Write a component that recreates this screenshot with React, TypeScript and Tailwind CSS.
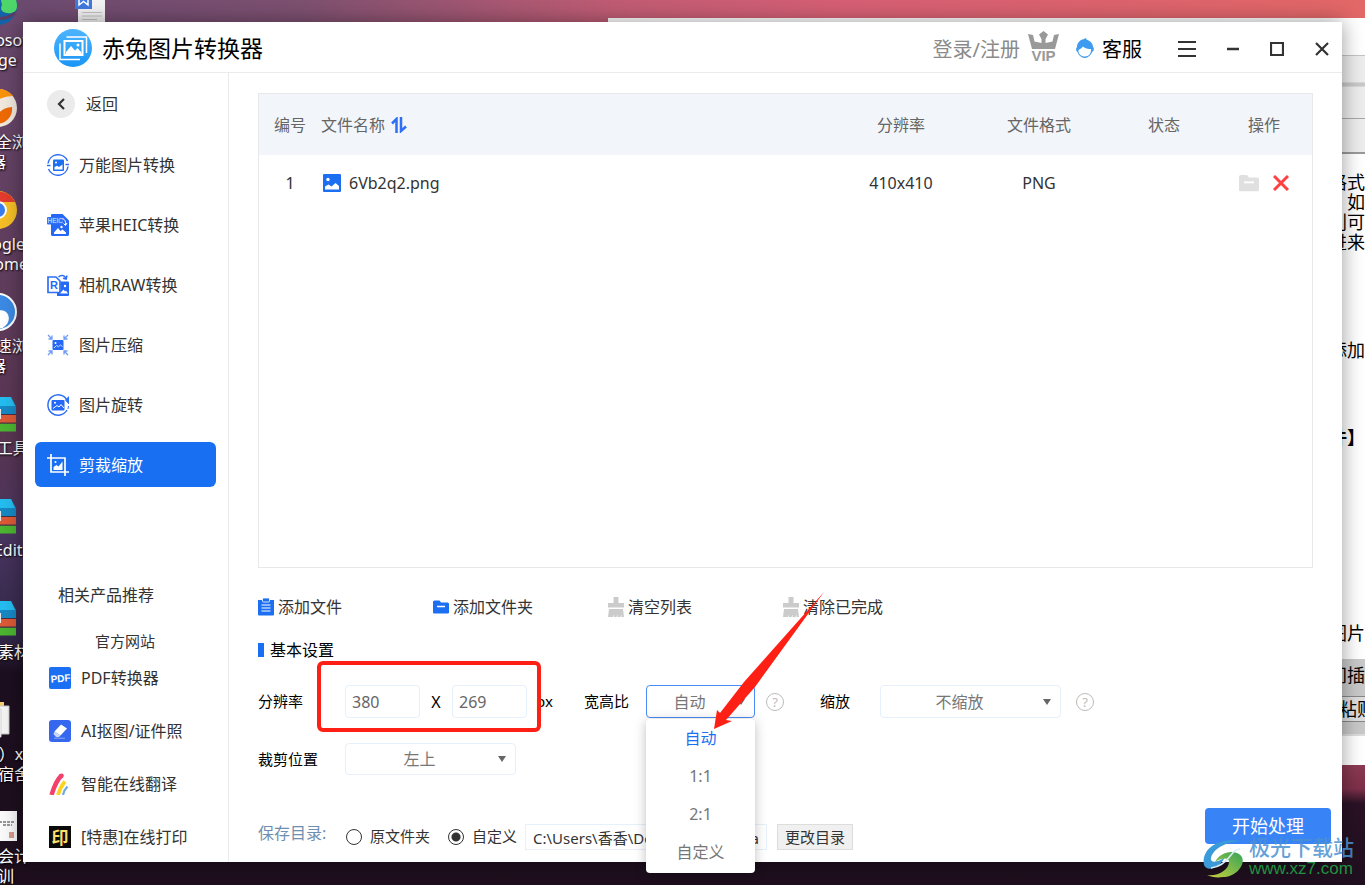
import clsx from 'clsx';
import { useState, type ReactNode } from 'react';

const svgBox = 'h-[22px] w-[22px] shrink-0';

function UniversalIcon() {
    return (
        <svg viewBox="0 0 22 22" className={svgBox} fill="none" stroke="#2f6ff5">
            <path d="M1 9.5A10.2 10.2 0 0 1 20.5 7M21 12.5A10.2 10.2 0 0 1 1.5 15" strokeWidth="1.5" />
            <path d="M0 11.5h3.5M18.5 10.5h3.5" strokeWidth="1.5" />
            <rect x="6" y="5.5" width="11" height="11.5" rx="1" fill="#1d6ff2" stroke="none" />
            <path d="M7.5 15.5v-2.500l2.5-1.300 2 1.200 3.5-2.400v5z" fill="#fff" stroke="none" />
            <circle cx="9" cy="8.5" r="1" fill="#fff" stroke="none" />
        </svg>
    );
}

function HeicIcon() {
    return (
        <svg viewBox="0 0 22 22" className={svgBox}>
            <path d="M5 0h10.5L22 6.5v14a1.5 1.5 0 0 1-1.5 1.5h-15A1.5 1.5 0 0 1 4 20.5V1a1 1 0 0 1 1-1z" fill="#2468f5" />
            <rect x="0" y="3" width="16" height="7.5" rx="1" fill="#2f6ff5" />
            <text x="0.5" y="9" fontSize="6.5" fill="#dce8ff" fontFamily="Liberation Sans, sans-serif">
                HEIC
            </text>
            <path d="M7 20v-1.5l4-4.5 2.5 3 2-1.5 3.5 3V20z" fill="#fff" />
            <path d="M15.5 4.5c2.5 1 3.5 3 3 6.5M16.5 9.5l2 2 1.5-2.5" stroke="#fff" fill="none" />
            <circle cx="14.5" cy="13" r="1.2" fill="#fff" />
        </svg>
    );
}

function RawIcon() {
    return (
        <svg viewBox="0 0 22 22" className={svgBox} fill="none">
            <path d="M13.5 7.5H21a1 1 0 0 1 1 1V21a1 1 0 0 1-1 1H10v-4h3.5z" fill="#2468f5" />
            <path d="M1 3h8l4 4v11.5H1z" fill="#fff" stroke="#2f6ff5" strokeWidth="1.7" />
            <text x="3" y="15" fontSize="11" fontWeight="700" fill="#2468f5" fontFamily="Liberation Sans, sans-serif">
                R
            </text>
            <path d="M11.5 3c2.5-2.5 6-2 7.5 1.5M20 1.5l-.8 3.5-3.2-.8" stroke="#2f6ff5" strokeWidth="1.5" />
            <path d="M13 19.5l3.5-4 1.5 2 1-1 2 3z" fill="#fff" />
            <circle cx="18" cy="12" r="1.2" fill="#fff" />
        </svg>
    );
}

function CompressIcon() {
    return (
        <svg viewBox="0 0 22 22" className={svgBox} fill="none" stroke="#6f9bf8" strokeWidth="1.3">
            <rect x="5.5" y="6" width="11" height="10" rx="1" fill="#2468f5" stroke="none" />
            <path d="M7 14l2.5-2.5 2 1.2 2-1.7 2 1.5" stroke="#cfe0ff" strokeWidth="1" />
            <circle cx="8.5" cy="9" r="1" fill="#fff" stroke="none" />
            <path d="M1 1l4 4M5 1.5V5H1.5M21 1l-4 4M17 1.5V5h3.5M1 21l4-4M5 20.5V17H1.5M21 21l-4-4M17 20.5V17h3.5" />
        </svg>
    );
}

function RotateIcon() {
    return (
        <svg viewBox="0 0 22 22" className={svgBox} fill="none" stroke="#2f6ff5" strokeWidth="1.5">
            <path d="M20 6A10.2 10.2 0 1 0 20 16" />
            <path d="M22 2.5v7.5l-3.5-4zM21.5 12l-.5 3" fill="#2f6ff5" strokeWidth="1" />
            <rect x="4.5" y="6" width="13" height="10.5" rx="1" fill="#2468f5" stroke="none" />
            <path d="M6 14.5l4-3 2 1.5 2-2.5 3 3.5" stroke="#fff" strokeWidth="1" />
            <circle cx="8" cy="8.7" r="1" fill="#fff" stroke="none" />
        </svg>
    );
}

function CropIcon() {
    return (
        <svg viewBox="0 0 22 22" className={svgBox} fill="none" stroke="#fff" strokeWidth="1.7">
            <path d="M4 0v18h18M0 4h18v18" />
            <path d="M6.5 16v-3l3-2 2 1.5 4-5V16z" fill="#fff" stroke="none" />
            <circle cx="8.5" cy="8" r="1" fill="#fff" stroke="none" />
        </svg>
    );
}

function PdfIcon() {
    return (
        <svg viewBox="0 0 22 22" className={svgBox}>
            <rect width="22" height="22" rx="2" fill="#1a6ff2" />
            <text x="1.5" y="15" fontSize="10" fontWeight="700" fill="#fff" transform="rotate(-5 11 11)" fontFamily="Liberation Sans, sans-serif">
                PDF
            </text>
        </svg>
    );
}

function EraserIcon() {
    return (
        <svg viewBox="0 0 22 22" className={svgBox}>
            <rect width="22" height="22" rx="3" fill="#3568ee" />
            <path d="M12 4.5l6 4-6.5 7-6-4z" fill="#fff" />
            <path d="M5.5 11.5l6 4-1.5 1.5H7L4.5 14z" fill="#c9d7fb" />
            <path d="M5 18.2h11" stroke="#8faaf5" />
        </svg>
    );
}

function TranslateIcon() {
    return (
        <svg viewBox="0 0 22 22" className={svgBox} fill="none">
            <path d="M2.5 22C5 14 7.5 7 12.5 2.5" stroke="#f2416b" strokeWidth="4.5" />
            <circle cx="12.5" cy="2.8" r="2.3" fill="#f2416b" />
            <path d="M9 22c1.5-5 3-9 7-13.5" stroke="#ffd21c" strokeWidth="3.8" />
            <path d="M14 22c.5-3 2-6 4.5-8.5" stroke="#6ea8e0" strokeWidth="2.2" />
        </svg>
    );
}

function PrintIcon() {
    return (
        <svg viewBox="0 0 22 22" className={svgBox}>
            <rect width="22" height="22" fill="#0a0a0a" />
            <text x="2.5" y="17.5" fontSize="17" fontWeight="700" fill="#ffdf6b" fontFamily="Noto Sans CJK SC, sans-serif">
                印
            </text>
        </svg>
    );
}

function AppLogo() {
    return (
        <svg viewBox="0 0 38 38" className="h-[38px] w-[38px]" fill="none" stroke="#fff">
            <defs>
                <linearGradient id="logo" x1="0" y1="0" x2="0" y2="1">
                    <stop offset="0" stopColor="#4cb4ff" />
                    <stop offset="1" stopColor="#1b95f5" />
                </linearGradient>
            </defs>
            <circle cx="19" cy="19" r="19" fill="url(#logo)" stroke="none" />
            <path d="M12.5 8h20v16" strokeWidth="1.5" />
            <path d="M6 14.5v16h20" strokeWidth="1.5" />
            <rect x="10.5" y="12" width="18" height="14" strokeWidth="2" />
            <path d="M12 23l5-6 4 4.5 2.5-2.5 4 4.5v1.5H12z" fill="#fff" stroke="none" />
            <circle cx="24" cy="16" r="1.5" fill="#fff" stroke="none" />
        </svg>
    );
}

function FolderIcon({ className }: { className: string }) {
    return (
        <svg viewBox="0 0 16 14" className={className}>
            <path d="M0 2a1.5 1.5 0 0 1 1.5-1.5h5L8 2.5h6.5A1.5 1.5 0 0 1 16 4v8.5a1 1 0 0 1-1 1H1a1 1 0 0 1-1-1z" fill="currentColor" />
            <path d="M4 6.5h8" stroke="#fff" strokeWidth="1.5" />
        </svg>
    );
}

function ClipboardIcon() {
    return (
        <svg viewBox="0 0 16 18" className="h-[18px] w-4" fill="none">
            <path d="M0 2h16v14.5a1 1 0 0 1-1 1H1a1 1 0 0 1-1-1z" fill="#1d6ff2" />
            <rect x="4.5" y="0" width="7" height="4" rx="1" fill="#1d6ff2" stroke="#fff" strokeWidth=".8" />
            <path d="M3.5 7h9M3.5 10h9M3.5 13h9" stroke="#fff" strokeWidth="1.2" />
        </svg>
    );
}

function BrushIcon() {
    return (
        <svg viewBox="0 0 16 20" className="h-5 w-4" fill="#cbcbcb">
            <path d="M5.5 0h5v6H16v4.5H0V6h5.5zM1 12h14l1 8h-2.5v-2.5l-1 2.5H9.5v-2.5l-1 2.5H6v-2.5L5 20H0z" />
        </svg>
    );
}

const tools = [
    { label: '万能图片转换', icon: <UniversalIcon /> },
    { label: '苹果HEIC转换', icon: <HeicIcon /> },
    { label: '相机RAW转换', icon: <RawIcon /> },
    { label: '图片压缩', icon: <CompressIcon /> },
    { label: '图片旋转', icon: <RotateIcon /> },
    { label: '剪裁缩放', icon: <CropIcon /> },
];

const products = [
    { label: 'PDF转换器', icon: <PdfIcon /> },
    { label: 'AI抠图/证件照', icon: <EraserIcon /> },
    { label: '智能在线翻译', icon: <TranslateIcon /> },
    { label: '[特惠]在线打印', icon: <PrintIcon /> },
];

const actions = [
    { label: '添加文件', icon: <ClipboardIcon /> },
    { label: '添加文件夹', icon: <FolderIcon className="h-[14px] w-4 text-[#1d6ff2]" /> },
    { label: '清空列表', icon: <BrushIcon /> },
    { label: '清除已完成', icon: <BrushIcon /> },
];

const ratios = ['自动', '1:1', '2:1', '自定义'];

function WinRar() {
    return (
        <svg viewBox="0 0 38 38" className="h-[38px] w-[38px]">
            <path d="M3 2h29l5 9v8H3z" fill="#1788c4" />
            <path d="M3 2h29l4 9H3z" fill="#25bdf0" />
            <path d="M3 20h34v8H3z" fill="#dd5a37" />
            <path d="M3 28.5h34v8H3z" fill="#4cb531" />
            <path d="M3 19.5h34M3 28h34" stroke="#493043" />
            <path d="M18 14h4v10h-4z" fill="#e8e8e8" />
        </svg>
    );
}

const shortcuts: { lines: string[]; icon: ReactNode }[] = [
    {
        lines: ['Microsoft', 'Edge'],
        icon: (
            <svg viewBox="0 0 38 38" className="h-[38px] w-[38px]">
                <circle cx="19" cy="19" r="19" fill="#1463a8" />
                <path d="M19 0a19 19 0 0 1 19 19c0 6-5 8-10 7-6-1-7-5-5-8z" fill="#4fd66a" />
                <path d="M14 28c6 5 14 4 22-2" stroke="#5d3c66" strokeWidth="3" fill="none" />
            </svg>
        ),
    },
    {
        lines: ['360安全浏览', '器'],
        icon: (
            <svg viewBox="0 0 38 38" className="h-[38px] w-[38px]">
                <circle cx="19" cy="19" r="19" fill="#f2e9de" />
                <path d="M6 5a19 19 0 0 1 28 2c-6 0-14 2-28 10z" fill="#f9930e" />
                <path d="M18 35c-2-10 4-16 15-17 1 8-4 16-15 17z" fill="#ee6a06" />
            </svg>
        ),
    },
    {
        lines: ['Google', 'Chrome'],
        icon: (
            <svg viewBox="0 0 38 38" className="h-[38px] w-[38px]">
                <circle cx="19" cy="19" r="19" fill="#f6bf26" />
                <path d="M2 11a19 19 0 0 1 34 0z" fill="#e33b2e" />
                <circle cx="19" cy="19" r="9" fill="#fff" />
                <circle cx="19" cy="19" r="7" fill="#3b7ded" />
            </svg>
        ),
    },
    {
        lines: ['360极速浏览', '器'],
        icon: (
            <svg viewBox="0 0 38 38" className="h-[38px] w-[38px]">
                <circle cx="19" cy="19" r="18" fill="#3b8ae4" stroke="#fff" strokeWidth="2" />
                <path d="M8 34c0-12 14-22 20-14 5 7-1 15-9 16z" fill="#fff" />
            </svg>
        ),
    },
    { lines: ['PDF工具'], icon: <WinRar /> },
    { lines: ['HtmlEditor'], icon: <WinRar /> },
    { lines: ['图片素材'], icon: <WinRar /> },
    {
        lines: ['1（1）xx', '学生宿舍'],
        icon: (
            <svg viewBox="0 0 38 38" className="h-[38px] w-[38px]">
                <path d="M6 1h19v30H6z" fill="#f5cd6d" />
                <path d="M10 5h20v28H10z" fill="#f4f4f4" stroke="#c4c4c4" />
                <path d="M4 8h18v28H4z" fill="#fff" stroke="#cfcfcf" />
            </svg>
        ),
    },
    {
        lines: ['初级会计', '培训'],
        icon: (
            <svg viewBox="0 0 38 38" className="h-[38px] w-[38px]">
                <path d="M0 8h38v30H0z" fill="#fafafa" />
                <path d="M20 19h15M24 22h9" stroke="#777" strokeWidth="1.5" strokeDasharray="3 1" />
                <path d="M30 29h5v6h-5z" fill="#d89a8a" />
            </svg>
        ),
    },
];

function Desktop() {
    return (
        <>
            <div className="absolute top-[-13px] left-[-52px] grid w-[100px] auto-rows-[102px]">
                {shortcuts.map(({ lines, icon }) => (
                    <div key={lines.join('')} className="flex flex-col items-center">
                        {icon}
                        <div className="mt-[5px] text-center text-base leading-5 whitespace-nowrap text-white [text-shadow:1px_1px_2px_#000]">
                            {lines.map((line) => (
                                <div key={line}>{line}</div>
                            ))}
                        </div>
                    </div>
                ))}
            </div>
            <svg viewBox="0 0 30 24" className="absolute top-0 left-[75px] h-6 w-[30px]">
                <path d="M3 0h27v24H3z" fill="#f3f3f3" />
                <path d="M0 0h17v9H0z" fill="#4179e0" />
                <path d="M4 0v5l4.5-3.5L13 5V0" stroke="#fff" strokeWidth="1.5" fill="none" />
                <path d="M7 12.5h20M7 16h20M7 19.5h15" stroke="#c4c4c4" />
            </svg>
        </>
    );
}

// Document window sitting behind the converter; only its edges stay visible.
function BackWindow() {
    return (
        <div className="absolute top-[18px] right-0 bottom-[120px] left-[608px] flex flex-col items-end overflow-hidden bg-white text-lg leading-5 text-black">
            <div className="h-[38px] w-full border-b border-[#c4c4c4]" />
            <div className="h-[26px] w-full bg-[#ededed]" />
            <div className="h-[5px] w-full border-y border-[#d9d9d9] bg-[#c9c9c9]" />
            <div className="h-8 w-full border-b border-[#a8a8a8] bg-[#ededed]" />
            <div className="h-[35px] w-full border-b-2 border-[#999] bg-[#ededed]" />
            <div className="mt-[18px] text-right">
                <p>格式</p>
                <p>如</p>
                <p>别可</p>
                <p>进来</p>
            </div>
            <p className="mt-[88px]">添加</p>
            <p className="mt-[67px] font-bold">件】</p>
            <p className="mt-[176px]">图片</p>
            <div className="mt-4 flex w-full flex-col items-end border-b-2 border-[#ddd] bg-[#c9c9c9] pb-3">
                <p className="h-[37px] leading-8">间插</p>
                <div className="w-full border-y border-[#888] bg-[#dedede] text-right leading-6">
                    <span className="-mr-[10px]">粘贴</span>
                </div>
            </div>
        </div>
    );
}

function TitleBar() {
    return (
        <header className="flex h-[51px] shrink-0 items-center border-b border-[#ebebeb] pt-[2px] pr-[13px] pl-[31px]">
            <AppLogo />
            <h1 className="ml-[10px] text-[23px] leading-8 text-black">赤兔图片转换器</h1>
            <button type="button" className="ml-auto flex items-center gap-2 text-xl text-[#8a8a8a]">
                <span className="pt-1">登录/注册</span>
                <span className="flex w-[31px] flex-col items-center pb-1">
                    <svg viewBox="0 0 31 19" className="h-[19px] w-[31px]" fill="#999">
                        <path d="M0 3l5 1 1.5 6.5L13.5 12V8L11 3.5 15.5 0 20 3.5 17.5 8v4l7-1.5L26 4l5-1-4 15H4z" />
                    </svg>
                    <span className="font-[Liberation_Sans,sans-serif] text-[15px] leading-3 font-bold text-[#999]">VIP</span>
                </span>
            </button>
            <button type="button" className="ml-[17px] flex items-center gap-2 pt-1 text-xl text-black">
                <svg viewBox="0 0 18 20" className="-mt-1 h-5 w-[18px]">
                    <path d="M8 1l2-1 .5 1.5C15 3 17 6 17 9c1.5 1 1 4-.5 4.5C15 17 12 20 9 20s-6.5-2.5-7.5-6C-.5 13 0 10 1 9c0-4 2.5-7 7-8z" fill="#3d9cf2" />
                    <path d="M2.5 12C4 11 6 10 7 8.5c2 2 5 2.5 8 2.5.5 4-2 7.5-6 7.5S2 16 2.5 12z" fill="#fff" />
                </svg>
                客服
            </button>
            <div className="ml-9 flex items-center gap-[31px] pt-[2px] text-[#333]">
                <button type="button" aria-label="菜单">
                    <svg viewBox="0 0 18 16" className="h-4 w-[18px]" stroke="currentColor" strokeWidth="2">
                        <path d="M0 1h18M0 8h18M0 15h18" />
                    </svg>
                </button>
                <button type="button" aria-label="最小化">
                    <svg viewBox="0 0 12 14" className="h-[14px] w-3" stroke="currentColor" strokeWidth="2.5">
                        <path d="M0 7h12" />
                    </svg>
                </button>
                <button type="button" aria-label="最大化">
                    <svg viewBox="0 0 14 14" className="h-[14px] w-[14px]" fill="none" stroke="currentColor" strokeWidth="2.2">
                        <path d="M1 1h12v12H1z" />
                    </svg>
                </button>
                <button type="button" aria-label="关闭">
                    <svg viewBox="0 0 14 14" className="h-[14px] w-[14px]" stroke="currentColor" strokeWidth="2.2">
                        <path d="M1 1l12 12M13 1L1 13" />
                    </svg>
                </button>
            </div>
        </header>
    );
}

function Sidebar() {
    const [active, setActive] = useState('剪裁缩放');

    return (
        <aside className="flex w-[206px] shrink-0 flex-col border-r border-[#ebebeb] text-base text-[#333]">
            <button type="button" className="mt-[17px] ml-6 flex h-7 items-center gap-[11px]">
                <span className="flex h-7 w-7 items-center justify-center rounded-full bg-[#ebebeb]">
                    <svg viewBox="0 0 8 12" className="h-3 w-2" fill="none" stroke="#333" strokeWidth="2.2">
                        <path d="M7 1L2 6l5 5" />
                    </svg>
                </span>
                返回
            </button>
            <nav className="mx-3 mt-6 flex flex-col gap-[15px]">
                {tools.map(({ label, icon }) => (
                    <button
                        key={label}
                        type="button"
                        onClick={() => setActive(label)}
                        className={clsx('flex h-[45px] items-center gap-[10px] rounded-md pl-3', label === active && 'bg-[#186ff2] text-white')}
                    >
                        {icon}
                        {label}
                    </button>
                ))}
            </nav>
            <h2 className="mt-24 ml-[35px] leading-6">相关产品推荐</h2>
            <a href="#site" className="mt-6 ml-[72px] text-[15px] leading-5">
                官方网站
            </a>
            <ul className="mt-4 ml-[26px] flex flex-col gap-[31px]">
                {products.map(({ label, icon }) => (
                    <li key={label}>
                        <a href="#product" className="flex h-[22px] items-center gap-[10px] whitespace-nowrap">
                            {icon}
                            {label}
                        </a>
                    </li>
                ))}
            </ul>
        </aside>
    );
}

function FileTable() {
    return (
        <div className="mr-[29px] flex-1 border border-[#e6e8ea]">
            <table className="w-full table-fixed text-base text-[#333]">
                <thead>
                    <tr className="h-[61px] bg-[#f2f6fa] text-[#666] [&>th]:font-normal">
                        <th className="w-[62px]">编号</th>
                        <th className="text-left">
                            <span className="flex items-center gap-[6px]">
                                文件名称
                                <svg viewBox="0 0 16 16" className="h-4 w-4" fill="none" stroke="#2f6ff5" strokeWidth="2.5">
                                    <path d="M5.5 16V2L1 6.5M10 0v14l5-4.5" />
                                </svg>
                            </span>
                        </th>
                        <th className="w-[130px]">分辨率</th>
                        <th className="w-[146px]">文件格式</th>
                        <th className="w-[104px]">状态</th>
                        <th className="w-24">操作</th>
                    </tr>
                </thead>
                <tbody>
                    <tr className="h-14 text-center">
                        <td>1</td>
                        <td>
                            <span className="flex items-center gap-2">
                                <svg viewBox="0 0 18 18" className="ml-[2px] h-[18px] w-[18px]">
                                    <rect width="18" height="18" rx="1" fill="#1d6ff2" />
                                    <circle cx="5" cy="5.5" r="1.7" fill="#fff" />
                                    <path d="M2 15.5v-3l3.5-2 3 2 4-3.5 3.5 3v3.5z" fill="#fff" />
                                </svg>
                                6Vb2q2.png
                            </span>
                        </td>
                        <td>410x410</td>
                        <td>PNG</td>
                        <td />
                        <td>
                            <span className="flex items-center justify-center gap-[14px]">
                                <button type="button" aria-label="打开文件夹">
                                    <FolderIcon className="h-[18px] w-5 text-[#e0e0e0]" />
                                </button>
                                <button type="button" aria-label="删除">
                                    <svg viewBox="0 0 16 16" className="h-4 w-4" stroke="#ff4040" strokeWidth="3">
                                        <path d="M1 1l14 14M15 1L1 15" />
                                    </svg>
                                </button>
                            </span>
                        </td>
                    </tr>
                </tbody>
            </table>
        </div>
    );
}

function Caret() {
    return (
        <svg viewBox="0 0 8 6" className="pointer-events-none absolute top-1/2 right-[10px] h-[6px] w-2 -translate-y-1/2" fill="#666">
            <path d="M0 0h8L4 6z" />
        </svg>
    );
}

function SelectBox({ id, value, options, onChange, open }: { id: string; value: string; options: string[]; onChange?: (v: string) => void; open?: boolean }) {
    return (
        <>
            <select
                id={id}
                value={value}
                onChange={(e) => onChange?.(e.target.value)}
                className={clsx(
                    'h-full w-full appearance-none rounded border bg-white pr-[22px] text-center text-base text-[#777] [text-align-last:center]',
                    open ? 'border-[#4a8df6]' : 'border-[#e6f0fa]',
                )}
            >
                {options.map((o) => (
                    <option key={o}>{o}</option>
                ))}
            </select>
            <Caret />
        </>
    );
}

function Help() {
    return (
        <button type="button" aria-label="帮助" className="h-[18px] w-[18px] shrink-0 rounded-full border border-[#bbb] text-[13px] leading-4 text-[#bbb]">
            ?
        </button>
    );
}

function Settings() {
    const [ratio, setRatio] = useState('自动');
    const field = 'h-[33px] w-[75px] rounded border border-[#e6f0fa] px-[6px] text-base text-[#666]';

    return (
        <>
            <div className="mt-[23px] flex h-[33px] items-center text-[15px] text-black">
                <label htmlFor="width" className="w-[87px]">
                    分辨率
                </label>
                <div className="relative flex items-center">
                    <input id="width" defaultValue="380" className={field} />
                    <label htmlFor="height" className="w-8 text-center text-base">
                        X
                    </label>
                    <input id="height" defaultValue="269" className={field} />
                    <div className="pointer-events-none absolute -top-6 -right-[14px] -bottom-[14px] -left-7 z-10 rounded-md border-4 border-[#ff2015]" />
                </div>
                <span className="ml-[9px] w-[48px]">px</span>
                <label htmlFor="ratio" className="w-[62px]">
                    宽高比
                </label>
                <div className="relative h-[33px] w-[109px]">
                    <SelectBox id="ratio" value={ratio} options={ratios} onChange={setRatio} open />
                    <ul role="listbox" className="absolute top-[34px] right-0 left-0 z-10 flex h-[154px] flex-col rounded bg-white pb-[2px] shadow-[0_2px_12px_rgba(0,0,0,0.25)]">
                        {ratios.map((r) => (
                            <li key={r} role="option" aria-selected={r === ratio} className="flex-1">
                                <button type="button" onClick={() => setRatio(r)} className={clsx('h-full w-full text-base', r === ratio ? 'text-[#1d6ff2]' : 'text-[#777]')}>
                                    {r}
                                </button>
                            </li>
                        ))}
                    </ul>
                    <svg viewBox="0 0 112 140" className="pointer-events-none absolute top-[-94px] left-[67px] z-20 h-[140px] w-28" fill="#ff2015">
                        <path d="M111 1L31 91 7 122 4 119 1 138 19 130 13 129 42 96z" />
                    </svg>
                </div>
                <span className="ml-[11px] flex w-[54px]">
                    <Help />
                </span>
                <label htmlFor="zoom" className="w-[60px]">
                    缩放
                </label>
                <div className="relative mr-[15px] h-[33px] w-[181px]">
                    <SelectBox id="zoom" value="不缩放" options={['不缩放']} />
                </div>
                <Help />
            </div>
            <div className="mt-[25px] flex h-8 items-center text-[15px] text-black">
                <label htmlFor="position" className="w-[87px]">
                    裁剪位置
                </label>
                <div className="relative h-8 w-[171px]">
                    <SelectBox id="position" value="左上" options={['左上']} />
                </div>
            </div>
        </>
    );
}

function SaveBar() {
    const [target, setTarget] = useState('custom');
    const radio = 'h-4 w-4 appearance-none rounded-full border border-[#333] checked:bg-[radial-gradient(circle,#333_0_4px,transparent_5px)]';

    return (
        <footer className="mt-[33px] mr-[11px] mb-3 flex h-[42px] items-end text-[15px] text-[#333]">
            <span className="mb-1 w-[88px] text-base leading-[26px] text-[#6f8fb0]">保存目录:</span>
            <label className="mr-[18px] flex h-[27px] items-center gap-2">
                <input type="radio" name="target" checked={target === 'source'} onChange={() => setTarget('source')} className={radio} />
                原文件夹
            </label>
            <label className="mr-2 flex h-[27px] items-center gap-2">
                <input type="radio" name="target" checked={target === 'custom'} onChange={() => setTarget('custom')} className={radio} />
                自定义
            </label>
            <input aria-label="保存目录" defaultValue="C:\Users\香香\Desktop\output\a" className="h-[26px] w-[242px] border border-[#e6f0fa] px-[7px]" />
            <button type="button" className="ml-[10px] h-[26px] w-19 border border-[#ddd] bg-[#f0f0f0]">
                更改目录
            </button>
            <button type="button" className="ml-auto h-9 w-[126px] self-start rounded bg-[#3884f7] text-lg text-white">
                开始处理
            </button>
        </footer>
    );
}

function Watermark() {
    return (
        <div className="pointer-events-none absolute right-[11px] bottom-[6px] z-30 flex items-center gap-1">
            <svg viewBox="0 0 42 40" className="h-10 w-[42px]" fill="none">
                <defs>
                    <linearGradient id="leaf" x1="0" y1="1" x2="1" y2="0">
                        <stop offset="0" stopColor="#c9cf3c" />
                        <stop offset="1" stopColor="#35a457" />
                    </linearGradient>
                </defs>
                <path d="M1 27C-2 12 14-1 38 3 22 4 10 11 8 20c-1 6 8 4 14-1-3 8-17 17-21 8z" fill="#3b9ada" />
                <path d="M4 37c10 2 22-5 22-13 0-5-8-4-14 0 4-8 14-12 22-9 13 5 2 24-14 24-6 1-12 0-16-2z" fill="url(#leaf)" />
                <path d="M8 30c9-1 15-6 20-13 3-4 6-6 9-6" stroke="#d9f0fa" strokeWidth="1.5" />
            </svg>
            <div className="flex flex-col">
                <span className="text-[21px] leading-5 font-medium text-[#4a90d0]/85">极光下载站</span>
                <span className="pt-[2px] font-[Liberation_Sans,sans-serif] text-[17px] leading-5 text-[#1f9140]">www.xz7.com</span>
            </div>
        </div>
    );
}

export default function App() {
    return (
        <div className="relative min-h-screen overflow-hidden bg-[#1f0f1e] font-[Noto_Sans,Noto_Sans_CJK_SC,sans-serif]">
            <div className="absolute inset-0 bg-[linear-gradient(180deg,#6b4a6f_0%,#593552_50%,#4a3560_60%,#33284a_72%,#1c0f20_76%,#1f0f1e_100%)]" />
            <div className="absolute inset-x-0 top-0 h-6 bg-[linear-gradient(90deg,#6b4a70_0%,#7d5070_22%,#c05c74_45%,#d65f74_62%,#e26767_100%)]" />
            <div className="absolute right-0 bottom-0 h-[120px] w-10 bg-[linear-gradient(180deg,#8c3a52_0%,#7d3049_20%,#2a1225_32%,#1f0f1e_100%)]" />
            <Desktop />
            <BackWindow />
            <div className="absolute inset-x-[23px] top-[22px] bottom-[23px] flex flex-col bg-white shadow-[0_0_20px_rgba(0,0,0,0.4)]">
                <TitleBar />
                <div className="flex flex-1">
                    <Sidebar />
                    <main className="flex flex-1 flex-col pt-5 pl-[29px]">
                        <FileTable />
                        <div className="mt-[26px] flex h-[26px] items-center text-base text-[#333]">
                            {actions.map(({ label, icon }) => (
                                <button key={label} type="button" className="flex w-[175px] items-center gap-1">
                                    {icon}
                                    {label}
                                </button>
                            ))}
                        </div>
                        <h2 className="mt-[18px] flex h-6 items-center gap-[6px] text-base text-black before:h-[14px] before:w-[6px] before:bg-[#186ff2]">基本设置</h2>
                        <Settings />
                        <SaveBar />
                    </main>
                </div>
            </div>
            <Watermark />
        </div>
    );
}
